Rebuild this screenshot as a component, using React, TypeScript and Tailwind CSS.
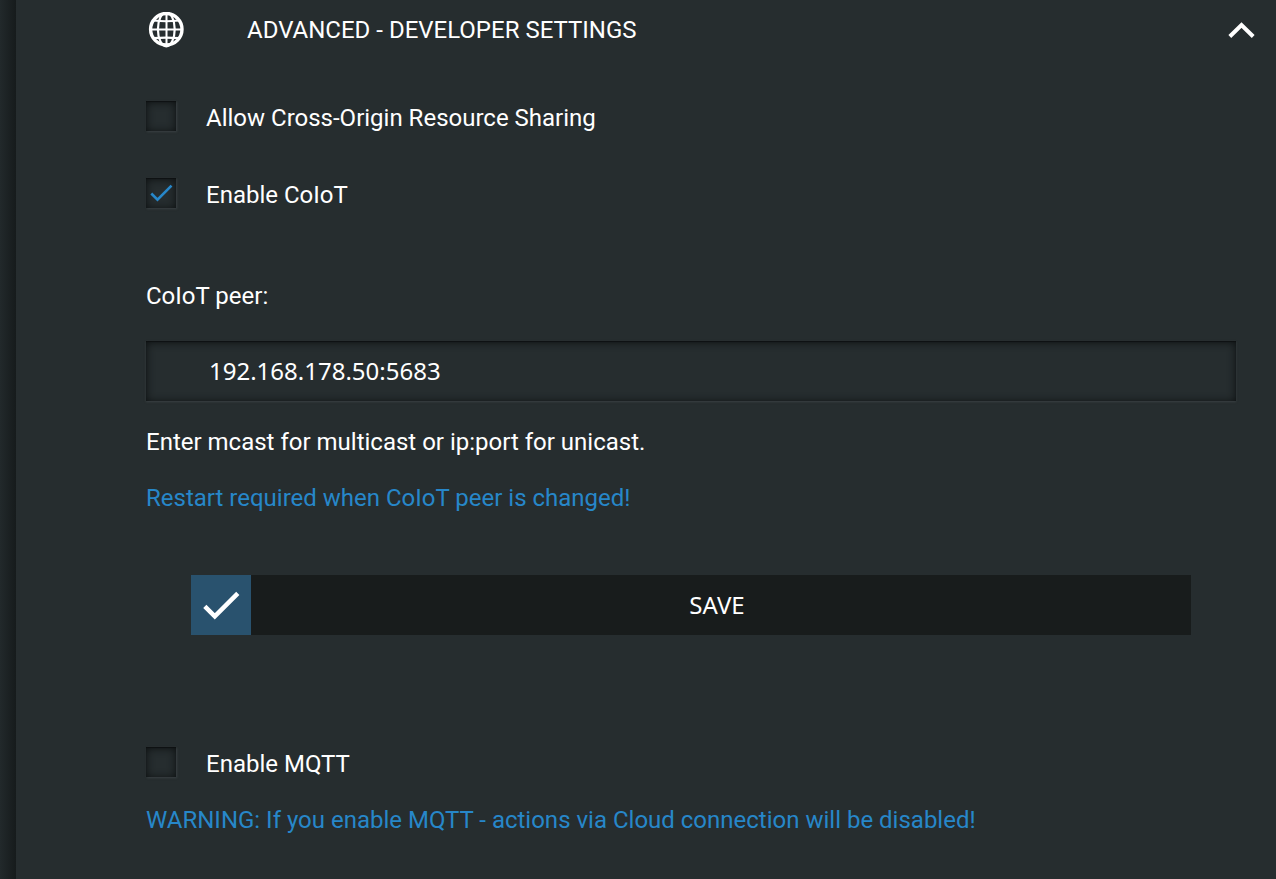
import { useState } from 'react';

function GlobeIcon() {
  return (
    <svg viewBox="0 0 36 36" className="size-9 shrink-0" fill="none" stroke="#fff" aria-hidden="true">
      <circle cx="18.300" cy="17.300" r="15.700" strokeWidth="3.400" />
      <ellipse cx="18.300" cy="17.300" rx="8.400" ry="17" strokeWidth="2.200" />
      <path d="M18.500 2v31M2 17.500h32" strokeWidth="2" />
      <path d="M5.500 8.500Q18 10 31 8.500M5.500 26.200Q18 25 31 26.200" strokeWidth="2.200" />
    </svg>
  );
}

function ChevronUpIcon() {
  return (
    <svg viewBox="0 0 28 18" className="h-[18px] w-7" fill="none" stroke="#fff" strokeWidth="4" aria-hidden="true">
      <path d="M1.800 15.500L13.500 4L25.200 15.500" />
    </svg>
  );
}

type CheckRowProps = { id: string; label: string; initial?: boolean };

function CheckRow({ id, label, initial = false }: CheckRowProps) {
  const [checked, setChecked] = useState(initial);
  return (
    <div className="flex h-8 items-center gap-[30px]">
      <span className="grid size-[30px] shrink-0">
        <input
          id={id}
          type="checkbox"
          checked={checked}
          onChange={(e) => setChecked(e.target.checked)}
          className="peer col-start-1 row-start-1 size-[30px] appearance-none bg-[#262d2f] shadow-[inset_0_1px_8px_#0c0f10,inset_0_1px_1px_#121617,1px_1px_2px_#3a3f42]"
        />
        <svg
          viewBox="0 0 30 30"
          className="pointer-events-none col-start-1 row-start-1 hidden size-[30px] peer-checked:block"
          fill="none"
          stroke="#2787c9"
          strokeWidth="2.600"
          aria-hidden="true"
        >
          <path d="M5.300 15.500L11.500 21.700L25.500 7.700" />
        </svg>
      </span>
      <label htmlFor={id} className="pt-1">{label}</label>
    </div>
  );
}

export default function App() {
  const [open, setOpen] = useState(true);
  const [peer, setPeer] = useState('192.168.178.50:5683');

  return (
    <div className="flex min-h-screen bg-[#262d2f] font-['Roboto','Liberation_Sans',sans-serif] text-2xl leading-8 text-white">
      <div className="w-4 shrink-0 bg-linear-to-r from-[#22292b] to-[#161b1c]" />
      <main className="min-w-0 flex-1 pr-10 pb-10 pl-[130px]">
        <h2 className="-mr-5">
          <button
            type="button"
            aria-expanded={open}
            onClick={() => setOpen(!open)}
            className="flex h-[60px] w-full items-center pl-0.5 text-left"
          >
            <GlobeIcon />
            <span className="ml-[63px] flex-1">ADVANCED - DEVELOPER SETTINGS</span>
            <ChevronUpIcon />
          </button>
        </h2>

        {open && (
          <form onSubmit={(e) => e.preventDefault()}>
            <div className="mt-10 flex flex-col gap-[45px]">
              <CheckRow id="cors" label="Allow Cross-Origin Resource Sharing" />
              <CheckRow id="coiot" label="Enable CoIoT" initial />
            </div>

            <label htmlFor="peer" className="mt-[71px] block">CoIoT peer:</label>
            <input
              id="peer"
              type="text"
              value={peer}
              onChange={(e) => setPeer(e.target.value)}
              className="mt-[29px] block h-[60px] w-full bg-[#262d2f] px-[63px] pb-0.5 font-['Noto_Sans',sans-serif] shadow-[inset_0_1px_8px_#0c0f10,inset_0_1px_1px_#121617,0_1px_2px_#3a3f42] outline-none"
            />
            <p className="mt-[25px]">Enter mcast for multicast or ip:port for unicast.</p>
            <p className="mt-6 text-[#2787c9]">Restart required when CoIoT peer is changed!</p>

            <button type="submit" className="mx-auto mt-[61px] flex h-[60px] w-11/12 items-center bg-[#181c1c]">
              <span className="flex size-[60px] shrink-0 items-center justify-center bg-[#29526e]">
                <svg viewBox="0 0 60 60" className="size-[60px]" fill="none" stroke="#fff" strokeWidth="4.500" aria-hidden="true">
                  <path d="M13.800 31.300L23.800 41.300L46.800 18.300" />
                </svg>
              </span>
              <span className="flex-1 pr-2 text-center font-['Noto_Sans',sans-serif]">SAVE</span>
            </button>

            <div className="mt-[111px]">
              <CheckRow id="mqtt" label="Enable MQTT" />
            </div>
            <p className="mt-[26px] text-[#2787c9]">
              WARNING: If you enable MQTT - actions via Cloud connection will be disabled!
            </p>
          </form>
        )}
      </main>
    </div>
  );
}
